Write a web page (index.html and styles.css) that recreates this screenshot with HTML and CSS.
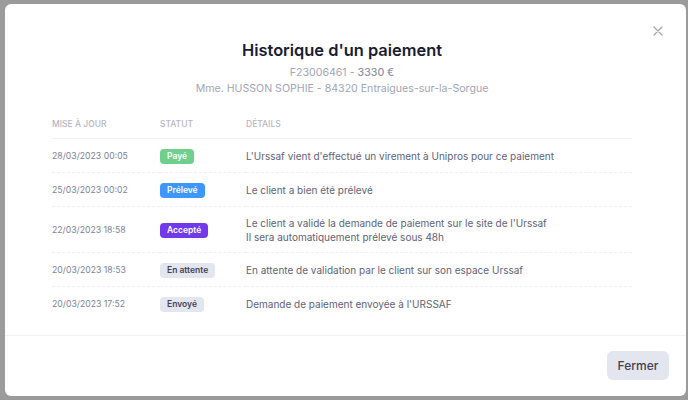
FILE: index.html
```html
<!DOCTYPE html>
<html lang="fr">
<head>
    <meta charset="UTF-8">
    <meta name="viewport" content="width=device-width, initial-scale=1.0">
    <title>Historique d'un paiement</title>
    <link rel="stylesheet" href="styles.css">
</head>
<body>
    <div class="modal">
        <button class="close" aria-label="Fermer">
            <svg width="10" height="10" viewBox="0 0 10 10"><path d="M1 1L9 9M9 1L1 9" stroke="#a1a5b7" stroke-width="1.2" stroke-linecap="round"/></svg>
        </button>
        <div class="modal-body">
            <h2 class="title">Historique d'un paiement</h2>
            <p class="sub">F23006461 - <b>3330 €</b></p>
            <p class="sub">Mme. HUSSON SOPHIE - 84320 Entraigues-sur-la-Sorgue</p>

            <table class="history">
                <thead>
                    <tr>
                        <th class="col-date">Mise à jour</th>
                        <th class="col-status">Statut</th>
                        <th>Détails</th>
                    </tr>
                </thead>
                <tbody>
                    <tr>
                        <td class="date">28/03/2023 00:05</td>
                        <td><span class="badge success">Payé</span></td>
                        <td>L'Urssaf vient d'effectué un virement à Unipros pour ce paiement</td>
                    </tr>
                    <tr>
                        <td class="date">25/03/2023 00:02</td>
                        <td><span class="badge primary">Prélevé</span></td>
                        <td>Le client a bien été prélevé</td>
                    </tr>
                    <tr>
                        <td class="date">22/03/2023 18:58</td>
                        <td><span class="badge info">Accepté</span></td>
                        <td>Le client a validé la demande de paiement sur le site de l'Urssaf<br>Il sera automatiquement prélevé sous 48h</td>
                    </tr>
                    <tr>
                        <td class="date">20/03/2023 18:53</td>
                        <td><span class="badge light">En attente</span></td>
                        <td>En attente de validation par le client sur son espace Urssaf</td>
                    </tr>
                    <tr>
                        <td class="date">20/03/2023 17:52</td>
                        <td><span class="badge light">Envoyé</span></td>
                        <td>Demande de paiement envoyée à l'URSSAF</td>
                    </tr>
                </tbody>
            </table>
        </div>
        <div class="modal-footer">
            <button class="btn">Fermer</button>
        </div>
    </div>
</body>
</html>
```

FILE: styles.css
```css
* {
    margin: 0;
    padding: 0;
    box-sizing: border-box;
    font-family: Inter, "Open Sans", sans-serif;
}
body {
    background-color: #9b9b9b;
    padding: 4px 2px 4px 5px;
    height: 400px;
    overflow: hidden;
}
.modal {
    position: relative;
    width: 681px;
    height: 392px;
    background: #ffffff;
    border-radius: 6px;
    display: flex;
    flex-direction: column;
}
.close {
    position: absolute;
    top: 22px;
    right: 23px;
    background: none;
    border: none;
    cursor: pointer;
    line-height: 0;
}
.modal-body {
    flex: 1;
    padding: 32px 54px 0 47px;
    text-align: center;
}
.title {
    font-size: 16.4px;
    font-weight: 600;
    color: #181c32;
    line-height: 28px;
    margin-bottom: 1px;
}
.sub {
    font-size: 10.6px;
    color: #a1a5b7;
    line-height: 16px;
}
.sub b {
    font-weight: 500;
    color: #8e92a6;
}
.history {
    width: 100%;
    margin-top: 22px;
    border-collapse: collapse;
    text-align: left;
}
.history th {
    font-size: 8.5px;
    font-weight: 500;
    text-transform: uppercase;
    color: #b5b5c3;
    padding: 0 0 9px;
    border-bottom: 1px solid #eff2f5;
}
.col-date {
    width: 108px;
}
.col-status {
    width: 86px;
}
.history td {
    font-size: 10px;
    color: #5e6278;
    line-height: 14px;
    padding: 8.5px 0;
    border-bottom: 1px dashed #eef0f4;
    vertical-align: middle;
}
.history tbody tr:last-child td {
    border-bottom: none;
}
.history td.date {
    font-size: 8.7px;
    color: #7e8299;
}
.badge {
    display: inline-block;
    font-size: 8.5px;
    font-weight: 600;
    line-height: 15px;
    padding: 0 7px;
    border-radius: 4px;
    color: #ffffff;
}
.success { background: #6fcf8c; }
.primary { background: #3e97ff; }
.info { background: #7239ea; }
.light { background: #e4e6ef; color: #3f4254; }
.modal-footer {
    border-top: 1px solid #eff2f5;
    padding: 15px 17px 16px;
    display: flex;
    justify-content: flex-end;
}
.btn {
    background: #e4e6ef;
    color: #3f4254;
    border: none;
    border-radius: 6px;
    font-size: 12px;
    font-weight: 500;
    width: 62px;
    height: 29px;
    cursor: pointer;
}
```
